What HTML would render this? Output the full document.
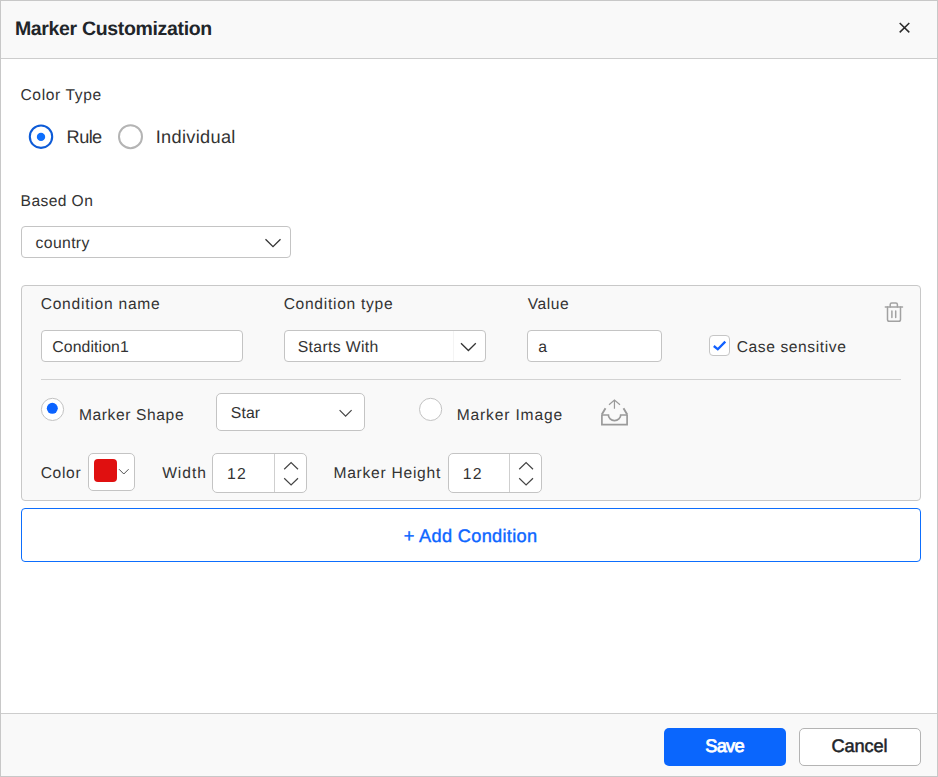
<!DOCTYPE html>
<html>
<head>
<meta charset="utf-8">
<title>Marker Customization</title>
<style>
*{box-sizing:border-box;margin:0;padding:0}
html,body{width:938px;height:777px;overflow:hidden;background:#fff}
body{font-family:"Liberation Sans",sans-serif;color:#333;position:relative;text-rendering:geometricPrecision}
.a{position:absolute;white-space:nowrap;line-height:1;color:#333}
.p{position:absolute}
#dlg{left:0;top:0;width:938px;height:777px;border:1px solid #c8c8c8;background:#fff}
#hdr{left:1px;top:1px;width:936px;height:57px;background:#f9f9f9}
#hdrline{left:1px;top:58px;width:936px;height:1px;background:#cdcdcd}
#ftr{left:1px;top:714px;width:936px;height:62px;background:#f9f9f9}
#ftrline{left:1px;top:713px;width:936px;height:1px;background:#cdcdcd}
.box{position:absolute;background:#fff;border:1px solid #c4c4c4;border-radius:4px}
#panel{left:21px;top:285px;width:900px;height:216px;background:#f9f9f9;border:1px solid #c8c8c8;border-radius:4px}
#div{left:41px;top:379px;width:860px;height:1px;background:#d2d2d2}
#add{left:21px;top:508px;width:900px;height:54px;border:1px solid #0d6efd;border-radius:4px;background:#fff}
#save{left:664px;top:728px;width:122px;height:38px;border-radius:5px;background:#0a66fd}
#cancel{left:799px;top:728px;width:122px;height:38px;border-radius:5px;background:#fff;border:1px solid #b4b4b4}
svg{position:absolute;overflow:visible}
</style>
</head>
<body>
<div class="p" id="dlg"></div>
<div class="p" id="hdr"></div><div class="p" id="hdrline"></div>
<div class="p" id="ftr"></div><div class="p" id="ftrline"></div>

<svg id="close" style="left:899px;top:22px" width="11" height="11" viewBox="0 0 11 11"><path d="M0.700 1L10.300 10.400M10.300 1L0.700 10.400" stroke="#2a2a2a" stroke-width="1.500" fill="none"/></svg>


<div class="box" id="dd1" style="left:21px;top:226px;width:270px;height:32px"></div>
<svg id="ch1" style="left:265px;top:238px" width="16" height="10" viewBox="0 0 16 10"><path d="M0.500 1.300L8 8.700L15.500 1.300" stroke="#333" stroke-width="1.300" fill="none"/></svg>

<div class="p" id="panel"></div>

<div class="box" id="in1" style="left:41px;top:330px;width:202px;height:32px"></div>
<div class="box" id="dd2" style="left:284px;top:330px;width:202px;height:32px"></div>
<div class="p" id="dd2d" style="left:453px;top:331px;width:1px;height:30px;background:#f4f4f4"></div>
<svg id="ch2" style="left:460px;top:342px" width="17" height="10" viewBox="0 0 17 10"><path d="M1 1.300L8.400 8.500L15.800 1.300" stroke="#333" stroke-width="1.300" fill="none"/></svg>
<div class="box" id="in2" style="left:527px;top:330px;width:135px;height:32px"></div>

<div class="box" id="cb" style="left:709px;top:335px;width:21px;height:21px;border-color:#c6c6c6;border-radius:4px"></div>
<svg id="cbk" style="left:713px;top:340px" width="14" height="11" viewBox="0 0 14 11"><path d="M0.800 6L4.800 9.300L12.300 1.600" stroke="#1060ff" stroke-width="2.300" fill="none"/></svg>

<svg id="trash" style="left:884px;top:302px" width="20" height="21" viewBox="0 0 20 21"><g stroke="#a2a2a2" stroke-width="1.500" fill="none" stroke-linecap="round"><path d="M1.300 4.900H18.500"/><path d="M6.200 4.900V2.600Q6.200 1 7.800 1H11.800Q13.400 1 13.400 2.600V4.900"/><path d="M3.500 4.900V17.400Q3.500 19.200 5.300 19.200H14.700Q16.500 19.200 16.500 17.400V4.900"/><path d="M7.900 9V15.600M11.700 9V15.600"/></g></svg>

<div class="p" id="div"></div>

<div class="box" id="dd3" style="left:216px;top:393px;width:149px;height:38px;border-radius:5px"></div>
<svg id="ch3" style="left:339px;top:409px" width="14" height="9" viewBox="0 0 14 9"><path d="M0.600 1.200L6.600 7.200L12.600 1.200" stroke="#444" stroke-width="1.200" fill="none"/></svg>

<svg id="upl" style="left:600px;top:398px" width="30" height="28" viewBox="0 0 30 28"><g stroke="#9a9a9a" fill="none"><path stroke-width="1.700" d="M1.900 16.500V26.600H27.100V16.500M1.400 17H8.400C8.400 20 11 22.600 14.500 22.600C18 22.600 20.700 20 20.700 17H27.600"/><path stroke-width="1.900" d="M1.800 16.600L5.500 10.300M27.200 16.600L23.500 10.300"/><path stroke-width="1.200" d="M14.450 2.300V10.800M9 6.800L14.450 2.100L20 6.800"/></g></svg>

<div class="box" id="cp" style="left:88px;top:453px;width:47px;height:38px;border-radius:5px"></div>
<div class="p" id="sw" style="left:94px;top:459px;width:23px;height:23px;background:#e01010;border-radius:4px"></div>
<svg id="ch4" style="left:118px;top:468px" width="12" height="8" viewBox="0 0 12 8"><path d="M1 1.200L5.800 6L10.600 1.200" stroke="#505050" stroke-width="1" fill="none"/></svg>

<div class="box" id="n1" style="left:212px;top:453px;width:95px;height:40px;border-radius:5px"></div>
<div class="p" id="n1d" style="left:274px;top:454px;width:1px;height:38px;background:#cfcfcf"></div>
<svg id="sp1" style="left:283px;top:461px" width="16" height="26" viewBox="0 0 16 26"><path d="M1.200 8.200L8.100 1.500L15 8.200M1.200 17.200L8.100 23.900L15 17.200" stroke="#444" stroke-width="1.200" fill="none"/></svg>

<div class="box" id="n2" style="left:448px;top:453px;width:94px;height:40px;border-radius:5px"></div>
<div class="p" id="n2d" style="left:509px;top:454px;width:1px;height:38px;background:#cfcfcf"></div>
<svg id="sp2" style="left:518px;top:461px" width="16" height="26" viewBox="0 0 16 26"><path d="M1.200 8.200L8.100 1.500L15 8.200M1.200 17.200L8.100 23.900L15 17.200" stroke="#444" stroke-width="1.200" fill="none"/></svg>

<div class="p" id="add"></div>
<div class="p" id="save"></div>
<div class="p" id="cancel"></div>

<svg id="radios" style="left:0;top:0" width="938" height="777" viewBox="0 0 938 777">
<circle cx="41" cy="136.700" r="11.200" fill="#fff" stroke="#0d5bd7" stroke-width="2.100"/>
<circle cx="41" cy="136.900" r="4.200" fill="#0d6efd"/>
<circle cx="130.500" cy="136.700" r="11.500" fill="#fff" stroke="#b4b4b4" stroke-width="2"/>
<circle cx="52.500" cy="409.400" r="11.100" fill="#fff" stroke="#c2c2c2" stroke-width="1"/>
<circle cx="52.300" cy="408.300" r="5.500" fill="#0b63ff"/>
<circle cx="430.600" cy="409.400" r="11.100" fill="#fff" stroke="#c2c2c2" stroke-width="1"/>
</svg>
<span class="a" id="title" style="left:14.91px;top:20.49px;font-size:19.5px;letter-spacing:-0.337px;font-weight:bold;color:#212529">Marker Customization</span>
<span class="a" id="l_ct" style="left:20.48px;top:87.88px;font-size:15.6px;letter-spacing:0.622px;">Color Type</span>
<span class="a" id="t_rule" style="left:66.62px;top:127.59px;font-size:18.2px;letter-spacing:-0.608px;">Rule</span>
<span class="a" id="t_ind" style="left:155.72px;top:127.59px;font-size:18.2px;letter-spacing:0.309px;">Individual</span>
<span class="a" id="l_bo" style="left:20.59px;top:193.94px;font-size:15.6px;letter-spacing:0.412px;">Based On</span>
<span class="a" id="t_country" style="left:35.52px;top:235.72px;font-size:15.8px;letter-spacing:0.340px;">country</span>
<span class="a" id="l_cn" style="left:40.63px;top:296.88px;font-size:15.6px;letter-spacing:0.762px;">Condition name</span>
<span class="a" id="l_cty" style="left:283.63px;top:296.88px;font-size:15.6px;letter-spacing:0.712px;">Condition type</span>
<span class="a" id="l_val" style="left:527.64px;top:296.94px;font-size:15.6px;letter-spacing:0.584px;">Value</span>
<span class="a" id="t_cond1" style="left:52.28px;top:339.72px;font-size:15.8px;letter-spacing:0.111px;">Condition1</span>
<span class="a" id="t_sw" style="left:297.67px;top:339.72px;font-size:15.8px;letter-spacing:0.341px;">Starts With</span>
<span class="a" id="t_a" style="left:538.27px;top:339.77px;font-size:15.8px;letter-spacing:0.000px;">a</span>
<span class="a" id="l_cs" style="left:736.63px;top:339.88px;font-size:15.6px;letter-spacing:0.606px;">Case sensitive</span>
<span class="a" id="l_ms" style="left:78.94px;top:407.88px;font-size:15.6px;letter-spacing:0.608px;">Marker Shape</span>
<span class="a" id="t_star" style="left:230.76px;top:405.77px;font-size:15.8px;letter-spacing:0.111px;">Star</span>
<span class="a" id="l_mi" style="left:456.78px;top:407.93px;font-size:15.6px;letter-spacing:0.831px;">Marker Image</span>
<span class="a" id="l_color" style="left:40.63px;top:465.88px;font-size:15.6px;letter-spacing:0.684px;">Color</span>
<span class="a" id="l_w" style="left:162.15px;top:465.88px;font-size:15.6px;letter-spacing:0.980px;">Width</span>
<span class="a" id="t_12a" style="left:226.98px;top:466.72px;font-size:15.8px;letter-spacing:1.322px;">12</span>
<span class="a" id="l_mh" style="left:333.42px;top:465.88px;font-size:15.6px;letter-spacing:0.746px;">Marker Height</span>
<span class="a" id="t_12b" style="left:462.80px;top:466.77px;font-size:15.8px;letter-spacing:1.072px;">12</span>
<span class="a" id="t_add" style="left:403.84px;top:526.59px;font-size:18.2px;letter-spacing:0.308px;color:#0d66ff;-webkit-text-stroke:0.4px #0d66ff">+ Add Condition</span>
<span class="a" id="t_save" style="left:705.13px;top:736.75px;font-size:18.2px;letter-spacing:-0.627px;color:#fff;-webkit-text-stroke:0.8px #fff">Save</span>
<span class="a" id="t_cancel" style="left:831.58px;top:736.59px;font-size:18.2px;letter-spacing:-0.126px;color:#212529;-webkit-text-stroke:0.5px #212529">Cancel</span>
</body>
</html>
